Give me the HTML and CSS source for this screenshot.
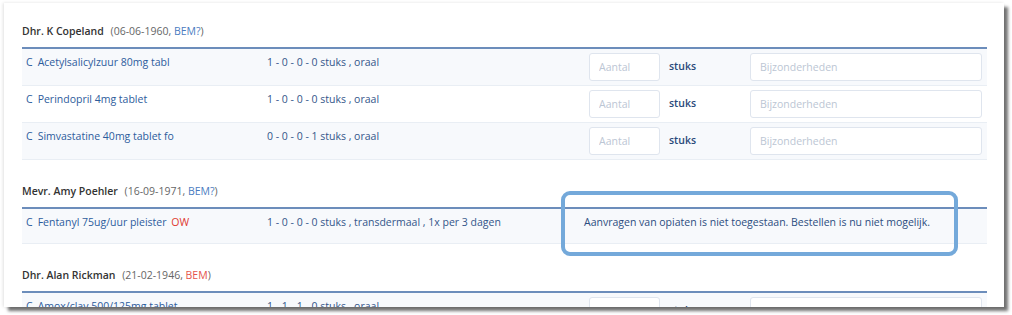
FILE: index.html
```html
<!DOCTYPE html>
<html>
<head>
    <meta charset="utf-8">
    <title>Bestellen</title>
    <link rel="stylesheet" href="styles.css">
</head>
<body>
    <div class="window">
        <div class="patient">
            <div class="patient-head">
                <span class="name">Dhr. K Copeland</span>
                <span class="meta">(06-06-1960, <span class="bem">BEM?</span>)</span>
            </div>
            <div class="row">
                <div class="med"><span class="c">C</span>Acetylsalicylzuur 80mg tabl</div>
                <div class="dose">1 - 0 - 0 - 0 stuks , oraal</div>
                <input class="amount" type="text" placeholder="Aantal">
                <div class="unit">stuks</div>
                <input class="notes" type="text" placeholder="Bijzonderheden">
            </div>
            <div class="row">
                <div class="med"><span class="c">C</span>Perindopril 4mg tablet</div>
                <div class="dose">1 - 0 - 0 - 0 stuks , oraal</div>
                <input class="amount" type="text" placeholder="Aantal">
                <div class="unit">stuks</div>
                <input class="notes" type="text" placeholder="Bijzonderheden">
            </div>
            <div class="row">
                <div class="med"><span class="c">C</span>Simvastatine 40mg tablet fo</div>
                <div class="dose">0 - 0 - 0 - 1 stuks , oraal</div>
                <input class="amount" type="text" placeholder="Aantal">
                <div class="unit">stuks</div>
                <input class="notes" type="text" placeholder="Bijzonderheden">
            </div>
        </div>

        <div class="patient">
            <div class="patient-head">
                <span class="name">Mevr. Amy Poehler</span>
                <span class="meta">(16-09-1971, <span class="bem">BEM?</span>)</span>
            </div>
            <div class="row row-short">
                <div class="med"><span class="c">C</span>Fentanyl 75ug/uur pleister <span class="ow">OW</span></div>
                <div class="dose">1 - 0 - 0 - 0 stuks , transdermaal , 1x per 3 dagen</div>
                <div class="blocked">
                    Aanvragen van opiaten is niet toegestaan. Bestellen is nu niet mogelijk.
                </div>
            </div>
        </div>

        <div class="patient">
            <div class="patient-head">
                <span class="name">Dhr. Alan Rickman</span>
                <span class="meta">(21-02-1946, <span class="bem bem-alert">BEM</span>)</span>
            </div>
            <div class="row">
                <div class="med"><span class="c">C</span>Amox/clav 500/125mg tablet</div>
                <div class="dose">1 - 1 - 1 - 0 stuks , oraal</div>
                <input class="amount" type="text" placeholder="Aantal">
                <div class="unit">stuks</div>
                <input class="notes" type="text" placeholder="Bijzonderheden">
            </div>
        </div>
    </div>
</body>
</html>
```

FILE: styles.css
```css
* { box-sizing: border-box; margin: 0; padding: 0; }
body {
    width: 1012px;
    height: 315px;
    overflow: hidden;
    background: #fff;
    font-family: 'Open Sans', sans-serif;
    font-size: 10.5px;
    color: #2f4f7f;
}
.window {
    margin: 3px 0 0 4px;
    width: 1000px;
    height: 304px;
    overflow: hidden;
    background: #fff;
    padding: 0 17px 0 18px;
    box-shadow: 4px 4px 3px rgba(0,0,0,0.55), -1px 0 3px rgba(0,0,0,0.12);
}
.patient { padding-top: 18px; }
.patient + .patient { padding-top: 21px; }
.patient-head {
    height: 28px;
    padding-top: 3px;
    border-bottom: 2px solid #6c8dbb;
    color: #666;
}
.name { font-weight: 600; color: #333; margin-right: 4px; }
.bem { color: #4a7bbf; }
.bem-alert { color: #e5534b; }
.row {
    display: flex;
    align-items: flex-start;
    height: 37px;
    padding: 4px 0 0 4px;
    background: #f7f9fc;
    border-bottom: 1px solid #e9eef4;
    position: relative;
}
.row:nth-child(odd) { background: #fff; }
.row-short { height: 35px; }
.med {
    width: 241px;
    padding-top: 2px;
    color: #2d5c9c;
}
.c { margin-right: 5px; }
.ow { color: #e03a30; margin-left: 2px; }
.dose {
    width: 322px;
    padding-top: 2px;
    color: #34568a;
}
.unit {
    width: 90px;
    padding: 6px 0 0 9px;
    color: #2a4a7a;
    font-weight: 600;
}
input {
    height: 28px;
    border: 1px solid #dfe5ee;
    border-radius: 3px;
    background: #fff;
    font-family: inherit;
    font-size: 10.5px;
    padding: 0 9px;
}
input::placeholder { color: #bcc6d4; }
.amount { width: 71px; }
.notes { width: 232px; }
.blocked {
    position: absolute;
    left: 539px;
    top: -18px;
    width: 397px;
    height: 65px;
    border: 4px solid #74a9da;
    border-radius: 9px;
    padding: 20px 0 0 19px;
    color: #2c4d80;
    white-space: nowrap;
}
```
